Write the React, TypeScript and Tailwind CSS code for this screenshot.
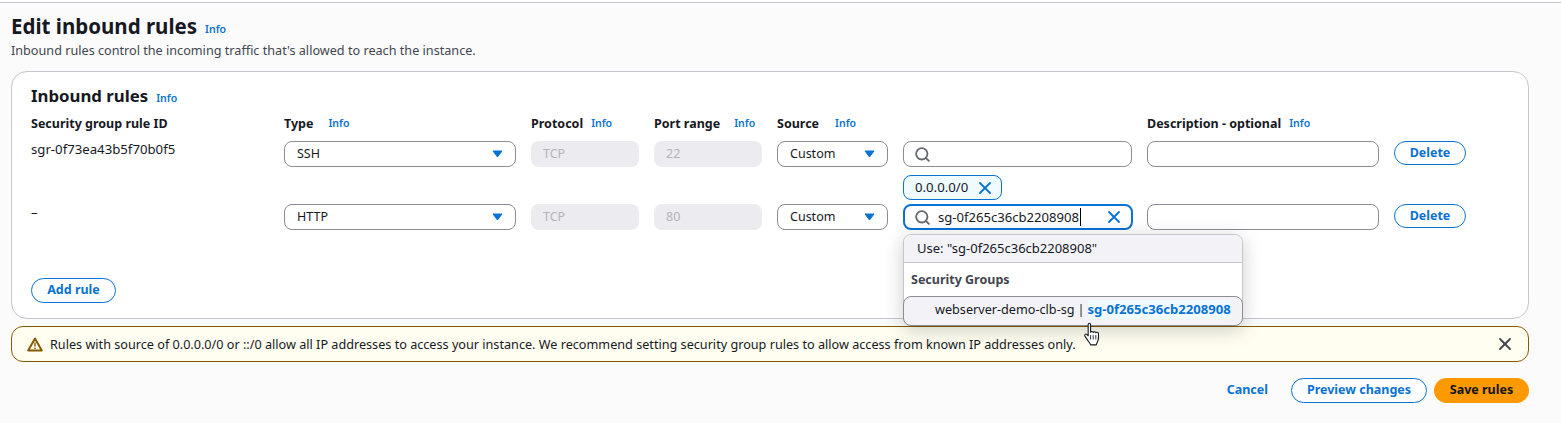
import { Search, X } from 'lucide-react';

const columns = 'grid grid-cols-[253px_247px_123px_123px_126px_244px_247px_72px]';

function Info({ className = '' }: { className?: string }) {
  return <a className={`text-[10.5px] font-semibold text-[#0972d3] ${className}`}>Info</a>;
}

function Label({ text, gap }: { text: string; gap: string }) {
  return (
    <div className={`flex h-[18px] items-center ${gap}`}>
      <span className="text-[12.5px] font-bold text-[#16191f]">{text}</span>
      <Info />
    </div>
  );
}

function Caret() {
  return (
    <svg width="11" height="8" viewBox="0 0 11 8" className="shrink-0">
      <path d="M1 1h9L5.5 7z" fill="#0972d3" stroke="#0972d3" strokeLinejoin="round" />
    </svg>
  );
}

function Select({ value, width }: { value: string; width: string }) {
  return (
    <div className={`flex h-[26px] items-center justify-between rounded-lg border border-[#8c8c94] bg-white pl-3 pr-3 text-[12.5px] text-[#16191f] ${width}`}>
      <span>{value}</span>
      <Caret />
    </div>
  );
}

function Disabled({ value }: { value: string }) {
  return (
    <div className="flex h-[26px] w-[108px] items-center rounded-lg bg-[#ebebf0] pl-3 text-[12.5px] text-[#b4b4bb]">
      {value}
    </div>
  );
}

function DeleteButton() {
  return (
    <button className="flex h-6 w-[72px] items-center justify-center rounded-full border border-[#0972d3] bg-white text-[12.5px] font-bold text-[#0972d3]">
      Delete
    </button>
  );
}

function Row({ id, type, port, children }: { id: string; type: string; port: string; children: React.ReactNode }) {
  return (
    <div className={columns}>
      <div className="-mt-px text-[13.2px] text-[#16191f]">{id}</div>
      <Select value={type} width="w-[232px]" />
      <Disabled value="TCP" />
      <Disabled value={port} />
      <Select value="Custom" width="w-[111px]" />
      <div>{children}</div>
      <div className="h-[26px] w-[232px] rounded-lg border border-[#8c8c94] bg-white" />
      <DeleteButton />
    </div>
  );
}

export default function App() {
  return (
    <div className="relative h-[423px] w-[1561px] overflow-hidden bg-[#fbfbfb] font-['Noto_Sans',sans-serif]">
      <div className="h-[3px] border-b border-[#c6c6cd] bg-white" />

      <div className="pl-[11px] pr-8">
        <div className="mt-[9px] flex h-7 items-center gap-2">
          <h1 className="text-[20.5px] font-bold leading-7 text-[#16191f]">Edit inbound rules</h1>
          <Info className="mt-2" />
        </div>
        <p className="mt-px h-[18px] text-[12.65px] leading-[18px] text-[#424650]">
          Inbound rules control the incoming traffic that's allowed to reach the instance.
        </p>

        {/* Rules card */}
        <div className="mt-[12px] h-[248px] w-[1518px] rounded-2xl border border-[#c6c6cd] bg-white pl-[19px] pt-[12px]">
          <div className="flex h-6 items-center gap-2">
            <h2 className="text-[16.8px] font-bold text-[#16191f]">Inbound rules</h2>
            <Info className="mt-[6px]" />
          </div>

          <div className={`${columns} mt-[7px]`}>
            <span className="text-[12.5px] font-bold leading-[18px] text-[#16191f]">Security group rule ID</span>
            <Label text="Type" gap="gap-[15px]" />
            <Label text="Protocol" gap="gap-2" />
            <Label text="Port range" gap="gap-[14px]" />
            <Label text="Source" gap="gap-4" />
            <div />
            <Label text="Description - optional" gap="gap-2" />
          </div>

          <div className="mt-[8px]">
            <Row id="sgr-0f73ea43b5f70b0f5" type="SSH" port="22">
              <div className="flex h-[26px] w-[229px] items-center rounded-lg border border-[#8c8c94] bg-white pl-[10px]">
                <Search size={17} strokeWidth={2.6} className="text-[#656871]" />
              </div>
            </Row>
          </div>

          <div className="relative mt-[8px] ml-[872px] flex h-[25px] w-[99px] items-center justify-between rounded-lg border border-[#0972d3] bg-[#f0fbff] pl-[11px] pr-[6px] text-[13.2px] text-[#16191f]">
            <span>0.0.0.0/0</span>
            <X size={20} strokeWidth={2.2} className="text-[#0972d3]" />
          </div>

          <div className="mt-1">
            <Row id="–" type="HTTP" port="80">
              <div className="flex h-[26px] w-[230px] items-center rounded-lg border-2 border-[#0972d3] bg-white pl-[9px] pr-[7px] text-[13.1px] text-[#16191f]">
                <Search size={17} strokeWidth={2.6} className="shrink-0 text-[#656871]" />
                <span className="ml-[7px] border-r border-black pr-px leading-[18px]">sg-0f265c36cb2208908</span>
                <X size={20} strokeWidth={2.2} className="ml-auto text-[#0972d3]" />
              </div>
            </Row>
          </div>

          <button className="mt-[48px] flex h-[25px] w-[85px] items-center justify-center rounded-full border border-[#0972d3] bg-white text-[12.5px] font-bold text-[#0972d3]">
            Add rule
          </button>
        </div>

        {/* Warning */}
        <div className="mt-[7px] flex h-9 w-[1518px] items-center rounded-xl border border-[#855900] bg-[#fffef0] pl-[15px] pr-[13px]">
          <svg width="16" height="15" viewBox="0 0 16 15" fill="none" className="shrink-0">
            <path d="M8 1.5 1.2 13.5h13.6z" stroke="#855900" strokeWidth="2" strokeLinejoin="round" />
            <path d="M8 5.5v4M8 10.6v1.4" stroke="#855900" strokeWidth="1.4" />
          </svg>
          <span className="ml-[7px] text-[12.65px] text-[#16191f]">
            Rules with source of 0.0.0.0/0 or ::/0 allow all IP addresses to access your instance. We recommend setting security group rules to allow access from known IP addresses only.
          </span>
          <X size={20} strokeWidth={2.2} className="ml-auto text-[#424650]" />
        </div>

        {/* Footer actions */}
        <div className="mt-4 flex w-[1518px] items-center justify-end">
          <a className="text-[12.5px] font-bold text-[#0972d3]">Cancel</a>
          <button className="ml-[23px] flex h-[25px] w-[136px] items-center justify-center rounded-full border border-[#0972d3] bg-white text-[12.5px] font-bold text-[#0972d3]">
            Preview changes
          </button>
          <button className="ml-[7px] flex h-[25px] w-[95px] items-center justify-center rounded-full bg-[#ff9900] text-[12.5px] font-bold text-[#0f141a]">
            Save rules
          </button>
        </div>
      </div>

      {/* Autosuggest dropdown */}
      <div className="absolute left-[903px] top-[234px] w-[340px] rounded-lg border border-[#c6c6cd] bg-white shadow-[0_4px_20px_rgba(0,7,22,0.2)]">
        <div className="flex h-[28px] items-center rounded-t-lg border-b border-[#c6c6cd] bg-[#f3f3f7] pl-[13px] text-[13px] text-[#16191f]">
          Use: "sg-0f265c36cb2208908"
        </div>
        <div className="flex h-[33px] items-center pl-[7px] pt-px text-[12.5px] font-bold text-[#424650]">Security Groups</div>
        <div className="-mx-px -mb-px flex h-[30px] items-center rounded-lg border border-[#8c8c94] bg-[#f3f3f7] pb-[3px] pl-[31px] text-[12.65px] text-[#16191f]">
          webserver-demo-clb-sg
          <span className="ml-[3px]">|</span>
          <span className="ml-[3px] bg-[#f0fbff] text-[13.1px] font-bold text-[#0972d3]">sg-0f265c36cb2208908</span>
        </div>
      </div>

      {/* Mouse pointer */}
      <svg width="18" height="24" viewBox="0 0 15 22" className="absolute left-[1083px] top-[322px]">
        <path
          d="M4 2.2c0-1.5 2.2-1.5 2.2 0v7.2c.3-1 2.3-1 2.4.2.3-1 2.3-.9 2.4.3.4-.9 2.3-.7 2.4.6.3 3 .2 4.8-.4 6.5-.5 1.5-1.3 2.6-1.6 4H6.2c-.4-1.4-1.6-2.8-2.6-4.2L1 13c-.8-1.3.8-2.6 2-1.5l1 1.2z"
          fill="#fff"
          stroke="#16191f"
          strokeWidth="1"
          strokeLinejoin="round"
        />
        <path d="M6.2 12v4M8.6 12v4M11 12v4" stroke="#16191f" strokeWidth=".8" />
      </svg>
    </div>
  );
}
